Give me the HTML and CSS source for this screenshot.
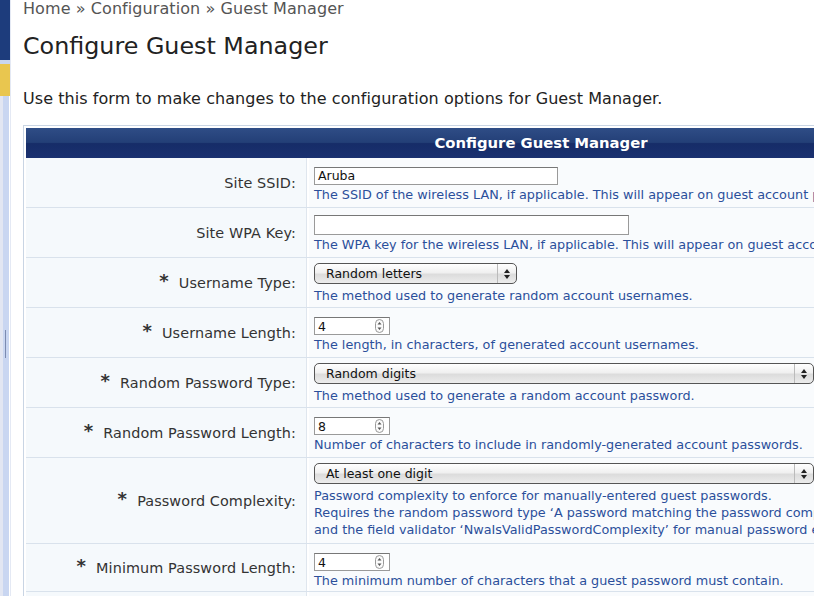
FILE: index.html
```html
<!DOCTYPE html>
<html>
<head>
<meta charset="utf-8">
<link rel="stylesheet" href="styles.css">
</head>
<body>
<div class="page">
  <div class="sidebar">
    <div class="sb-navy"></div>
    <div class="sb-gap"></div>
    <div class="sb-yellow"></div>
    <div class="sb-rest"><div class="sb-handle"></div></div>
  </div>
  <div class="main">
    <div class="crumbs">Home » Configuration » Guest Manager</div>
    <h1 class="title">Configure Guest Manager</h1>
    <p class="intro">Use this form to make changes to the configuration options for Guest Manager.</p>
    <div class="form">
      <div class="form-head">Configure Guest Manager</div>

      <div class="row">
        <div class="lbl">Site SSID:</div>
        <div class="val">
          <div class="text in-ssid">Aruba</div>
          <div class="help">The SSID of the wireless LAN, if applicable. This will appear on guest account print templates.</div>
        </div>
      </div>

      <div class="row">
        <div class="lbl">Site WPA Key:</div>
        <div class="val">
          <div class="text in-wpa"></div>
          <div class="help">The WPA key for the wireless LAN, if applicable. This will appear on guest account print templates.</div>
        </div>
      </div>

      <div class="row">
        <div class="lbl"><span class="req">*</span>Username Type:</div>
        <div class="val">
          <div class="sel sel-short"><span class="sel-text">Random letters</span><span class="sel-arr"><svg width="8" height="12" viewBox="0 0 8 12"><path d="M4 1 L7 5 L1 5 Z M4 11 L7 7 L1 7 Z" fill="#222"/></svg></span></div>
          <div class="help help-sel">The method used to generate random account usernames.</div>
        </div>
      </div>

      <div class="row">
        <div class="lbl"><span class="req">*</span>Username Length:</div>
        <div class="val">
          <div class="num"><span class="num-text">4</span><span class="spin"><svg width="9" height="14" viewBox="0 0 9 14"><rect x="0.5" y="0.5" width="8" height="13" rx="4" fill="#fafafa" stroke="#999"/><path d="M4.5 3 L6.5 5.5 L2.5 5.5 Z M4.5 11 L6.5 8.5 L2.5 8.5 Z" fill="#555"/></svg></span></div>
          <div class="help">The length, in characters, of generated account usernames.</div>
        </div>
      </div>

      <div class="row">
        <div class="lbl"><span class="req">*</span>Random Password Type:</div>
        <div class="val">
          <div class="sel sel-long"><span class="sel-text">Random digits</span><span class="sel-arr"><svg width="8" height="12" viewBox="0 0 8 12"><path d="M4 1 L7 5 L1 5 Z M4 11 L7 7 L1 7 Z" fill="#222"/></svg></span></div>
          <div class="help help-sel">The method used to generate a random account password.</div>
        </div>
      </div>

      <div class="row">
        <div class="lbl"><span class="req">*</span>Random Password Length:</div>
        <div class="val">
          <div class="num"><span class="num-text">8</span><span class="spin"><svg width="9" height="14" viewBox="0 0 9 14"><rect x="0.5" y="0.5" width="8" height="13" rx="4" fill="#fafafa" stroke="#999"/><path d="M4.5 3 L6.5 5.5 L2.5 5.5 Z M4.5 11 L6.5 8.5 L2.5 8.5 Z" fill="#555"/></svg></span></div>
          <div class="help">Number of characters to include in randomly-generated account passwords.</div>
        </div>
      </div>

      <div class="row row-tall">
        <div class="lbl"><span class="req">*</span>Password Complexity:</div>
        <div class="val">
          <div class="sel sel-long"><span class="sel-text">At least one digit</span><span class="sel-arr"><svg width="8" height="12" viewBox="0 0 8 12"><path d="M4 1 L7 5 L1 5 Z M4 11 L7 7 L1 7 Z" fill="#222"/></svg></span></div>
          <div class="help help-sel">Password complexity to enforce for manually-entered guest passwords.<br>Requires the random password type ‘A password matching the password complexity requirements’<br>and the field validator ‘NwaIsValidPasswordComplexity’ for manual password entry.</div>
        </div>
      </div>

      <div class="row row-last">
        <div class="lbl"><span class="req">*</span>Minimum Password Length:</div>
        <div class="val">
          <div class="num"><span class="num-text">4</span><span class="spin"><svg width="9" height="14" viewBox="0 0 9 14"><rect x="0.5" y="0.5" width="8" height="13" rx="4" fill="#fafafa" stroke="#999"/><path d="M4.5 3 L6.5 5.5 L2.5 5.5 Z M4.5 11 L6.5 8.5 L2.5 8.5 Z" fill="#555"/></svg></span></div>
          <div class="help">The minimum number of characters that a guest password must contain.</div>
        </div>
      </div>

      <div class="row">
        <div class="lbl"></div>
        <div class="val"></div>
      </div>
    </div>
  </div>
</div>
</body>
</html>
```

FILE: styles.css
```css
html, body {
  margin: 0;
  padding: 0;
  background: #fff;
  overflow: hidden;
  width: 814px;
  height: 596px;
}
.page {
  display: flex;
  height: 596px;
  font-family: "DejaVu Sans", Verdana, sans-serif;
}
.sidebar {
  width: 10px;
  flex: none;
  display: flex;
  flex-direction: column;
  border-right: 1px solid #e4e9f4;
}
.sb-navy {
  height: 60px;
  background: #1d3c7c;
}
.sb-gap {
  height: 4px;
  background: #c9d6ef;
}
.sb-yellow {
  height: 32px;
  background: #e9c64f;
}
.sb-rest {
  flex: 1;
  background: linear-gradient(to right, #e2e6f2 0 3px, #c9d6f1 3px 9px, #ffffff 9px);
  padding-top: 234px;
  padding-left: 5px;
}
.sb-handle {
  width: 1px;
  height: 28px;
  background: #7c8bb0;
}
.main {
  flex: 1;
  min-width: 0;
  padding-left: 12px;
  overflow: hidden;
}
.crumbs {
  font-size: 16px;
  line-height: 18px;
  color: #555;
  letter-spacing: 0.08px;
  white-space: nowrap;
}
.title {
  font-size: 23.8px;
  font-weight: normal;
  color: #222;
  margin: 14px 0 0 0;
  line-height: 28px;
  white-space: nowrap;
}
.intro {
  font-size: 16px;
  color: #222;
  margin: 29px 0 0 0;
  line-height: 20px;
  letter-spacing: 0.06px;
  white-space: nowrap;
}
.form {
  margin-top: 16px;
  width: 1030px;
  border: 1px solid #c9d5e4;
  border-bottom: none;
  padding: 2px 2px 0 2px;
}
.form-head {
  height: 30px;
  line-height: 29px;
  text-align: center;
  color: #fff;
  font-weight: bold;
  font-size: 14.8px;
  background: linear-gradient(to bottom, #2f4d86 0%, #233f77 48%, #162c68 52%, #1a3170 100%);
}
.row {
  display: flex;
  border-bottom: 1px solid #d9e2ec;
  min-height: 49px;
}
.row-tall {
  min-height: 85px;
}
.row-last {
  min-height: 47px;
}
.lbl {
  width: 281px;
  flex: none;
  box-sizing: border-box;
  background: #f5f9fc;
  border-right: 1px solid #dfe6ee;
  display: flex;
  align-items: center;
  justify-content: flex-end;
  padding-right: 10px;
  font-size: 14.4px;
  color: #333;
  white-space: nowrap;
  letter-spacing: 0.1px;
}
.req {
  font-weight: bold;
  font-size: 18px;
  margin-right: 10px;
  position: relative;
  top: -2px;
}
.val {
  flex: 1;
  background: #f9fbfd;
  border-left: 2px solid #fff;
  padding: 9px 0 0 5px;
  white-space: nowrap;
}
.text {
  height: 18px;
  box-sizing: border-box;
  border: 1px solid #9a9a9a;
  border-top-color: #777;
  background: #fff;
  font-size: 12.5px;
  line-height: 16px;
  padding-left: 3px;
  color: #111;
}
.in-ssid { width: 244px; }
.in-wpa { width: 315px; margin-top: -2px; height: 20px; }
.help {
  font-size: 12.8px;
  line-height: 17px;
  color: #2b4f9b;
  margin-top: 1px;
}
.help-sel {
  margin-top: 3px;
}
.sel {
  height: 21px;
  box-sizing: border-box;
  border: 1px solid #555;
  border-radius: 5px;
  background: linear-gradient(to bottom, #ffffff 0%, #f0f0f0 45%, #dcdcdc 55%, #ececec 100%);
  display: flex;
  align-items: center;
  font-size: 12.5px;
  color: #111;
  margin-top: -4px;
}
.sel-short { width: 203px; }
.sel-long { width: 500px; }
.sel-text {
  flex: 1;
  padding-left: 11px;
}
.sel-arr {
  width: 18px;
  height: 100%;
  border-left: 1px solid #bbb;
  display: flex;
  align-items: center;
  justify-content: center;
}
.num {
  width: 76px;
  height: 18px;
  box-sizing: border-box;
  border: 1px solid #9a9a9a;
  border-top-color: #777;
  background: #fff;
  display: flex;
  align-items: center;
  font-size: 12.5px;
  color: #111;
}
.num-text {
  flex: 1;
  padding-left: 3px;
}
.spin {
  width: 14px;
  display: flex;
  align-items: center;
}
```
